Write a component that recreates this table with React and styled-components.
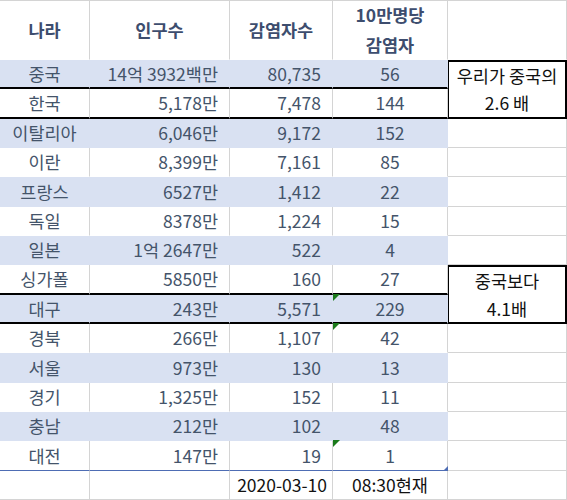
import styled, { createGlobalStyle, css } from 'styled-components';

const GlobalStyle = createGlobalStyle`
    html, body {
        margin: 0;
        padding: 0;
        background: #fff;
    }
    body {
        font-family: 'Noto Sans CJK KR', 'Noto Sans', sans-serif;
    }
`;

const GRID = '#d4d4d4';
const BAND = '#d9e1f2';
const INK = '#44546a';

const Sheet = styled.div`
    width: 567px;
    height: 500px;
    display: grid;
    grid-template-columns: 90px 140px 103px 115px 1fr;
    grid-template-rows: 59px repeat(15, 1fr);
    overflow: hidden;
    border-top: 1px solid ${GRID};
    box-sizing: border-box;
    font-size: 17.5px;
    color: ${INK};
`;

const Cell = styled.div`
    position: relative;
    box-sizing: border-box;
    display: flex;
    align-items: center;
    justify-content: ${(p) =>
        p.$align === 'right' ? 'flex-end' : 'center'};
    padding: 0 ${(p) => (p.$align === 'right' ? p.$pad || 11 : 0)}px 0 0;
    background: ${(p) => (p.$band ? BAND : '#fff')};
    border-right: 1px solid ${(p) => (p.$band ? 'transparent' : GRID)};
    border-bottom: ${(p) =>
        p.$thick
            ? '2px solid #000'
            : p.$blue
            ? '1px solid #4e6db4'
            : p.$line
            ? `1px solid ${GRID}`
            : '1px solid transparent'};
    color: ${(p) => (p.$black ? '#111' : INK)};
    line-height: 1;
    white-space: nowrap;

    ${(p) =>
        p.$flag &&
        css`
            &::before {
                content: '';
                position: absolute;
                left: 0;
                top: -1px;
                border-top: 7px solid #1a7a1a;
                border-right: 7px solid transparent;
            }
        `}

    ${(p) =>
        p.$handle &&
        css`
            &::after {
                content: '';
                position: absolute;
                right: -1px;
                bottom: -1px;
                border-bottom: 5px solid #4e6db4;
                border-left: 5px solid transparent;
            }
        `}
`;

const HeadCell = styled(Cell)`
    font-weight: 700;
    flex-direction: column;
    color: #3d4d6e;
    line-height: 30px;
`;

const Note = styled.div`
    grid-column: 5;
    grid-row: span 2;
    box-sizing: border-box;
    border: 2px solid #000;
    margin-left: -1px;
    display: grid;
    grid-template-rows: 1fr 1fr;
    background: #fff;
    color: #111;
`;

const NoteLine = styled.div`
    display: flex;
    align-items: center;
    justify-content: center;
    white-space: nowrap;
`;

const rows = [
    ['중국', '14억 3932백만', '80,735', '56'],
    ['한국', '5,178만', '7,478', '144'],
    ['이탈리아', '6,046만', '9,172', '152'],
    ['이란', '8,399만', '7,161', '85'],
    ['프랑스', '6527만', '1,412', '22'],
    ['독일', '8378만', '1,224', '15'],
    ['일본', '1억 2647만', '522', '4'],
    ['싱가폴', '5850만', '160', '27'],
    ['대구', '243만', '5,571', '229'],
    ['경북', '266만', '1,107', '42'],
    ['서울', '973만', '130', '13'],
    ['경기', '1,325만', '152', '11'],
    ['충남', '212만', '102', '48'],
    ['대전', '147만', '19', '1'],
];

const thickRows = [0, 1, 7, 8];
const flagRows = [8, 9, 13];
const notes = {
    0: ['우리가 중국의', '2.6 배'],
    7: ['중국보다', '4.1배'],
};
const underNote = [1, 8];

const App = () => {
    return (
        <>
            <GlobalStyle />
            <Sheet>
                <HeadCell>나라</HeadCell>
                <HeadCell>인구수</HeadCell>
                <HeadCell>감염자수</HeadCell>
                <HeadCell>
                    <span>10만명당</span>
                    <span>감염자</span>
                </HeadCell>
                <Cell />

                {rows.map((r, i) => {
                    const band = i % 2 === 0;
                    const thick = thickRows.includes(i);
                    const last = i === rows.length - 1;
                    return [
                        <Cell key={`${i}a`} $band={band} $thick={thick} $blue={last}>
                            {r[0]}
                        </Cell>,
                        <Cell key={`${i}b`} $band={band} $thick={thick} $blue={last} $align='right'>
                            {r[1]}
                        </Cell>,
                        <Cell key={`${i}c`} $band={band} $thick={thick} $blue={last} $align='right'>
                            {r[2]}
                        </Cell>,
                        <Cell
                            key={`${i}d`}
                            $band={band}
                            $thick={thick}
                            $blue={last}
                            $flag={flagRows.includes(i)}
                            $handle={last}
                        >
                            {r[3]}
                        </Cell>,
                        notes[i] ? (
                            <Note key={`${i}e`}>
                                <NoteLine>{notes[i][0]}</NoteLine>
                                <NoteLine>{notes[i][1]}</NoteLine>
                            </Note>
                        ) : underNote.includes(i) ? null : (
                            <Cell key={`${i}e`} $line />
                        ),
                    ];
                })}

                <Cell $line />
                <Cell $line />
                <Cell $line $black $align='right' $pad={5}>
                    2020-03-10
                </Cell>
                <Cell $line $black>
                    08:30현재
                </Cell>
                <Cell $line />
            </Sheet>
        </>
    );
};

export default App;
